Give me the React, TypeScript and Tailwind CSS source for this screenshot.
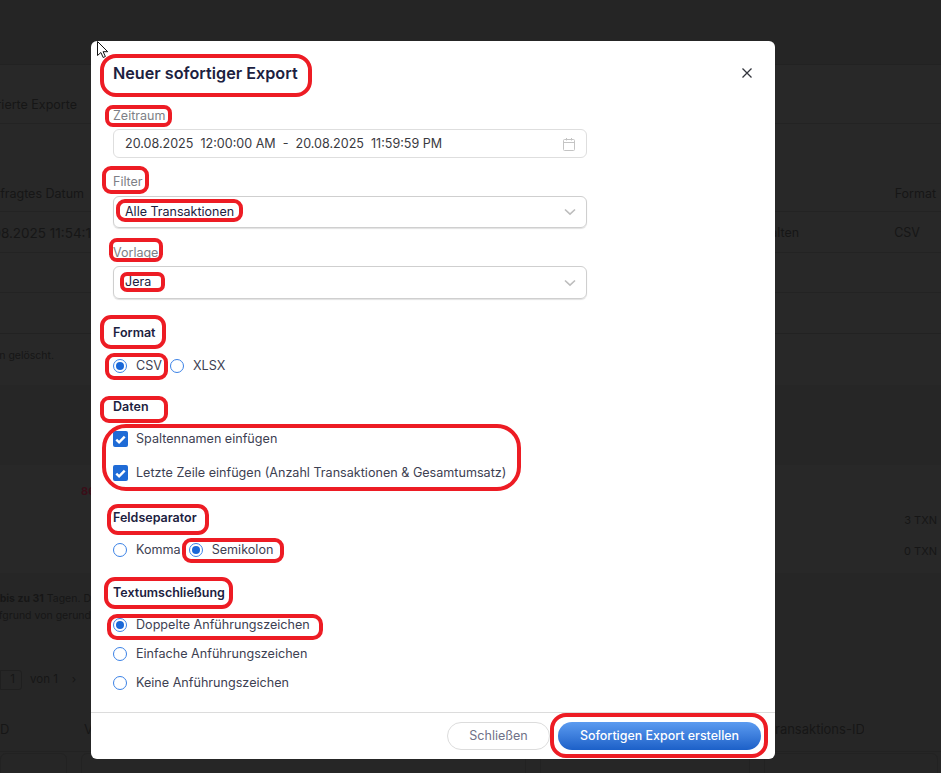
import React from "react";

const font = "font-['Inter',sans-serif]";

const Radio = ({ on, label }: { on?: boolean; label: string }) => (
  <div className="flex items-center gap-[9px] h-5">
    <span className="w-[14px] h-[14px] rounded-full border border-[#3b82e6] flex items-center justify-center bg-white">
      {on && <span className="w-[8px] h-[8px] rounded-full bg-[#1a68d8]" />}
    </span>
    <span className="text-[12.6px] leading-5 text-[#3d4152]">{label}</span>
  </div>
);

const Check = ({ label }: { label: string }) => (
  <div className="flex items-center gap-[8px] h-5">
    <span className="w-[15px] h-4 rounded-[2px] bg-[#1f6bd6] flex items-center justify-center">
      <svg width="11" height="9" viewBox="0 0 11 9" fill="none">
        <path d="M1.3 4.6 4.1 7.3 9.7 1.6" stroke="#fff" strokeWidth="2.4" />
      </svg>
    </span>
    <span className="text-[12.6px] leading-[20px] h-5 text-[#3d4152]">{label}</span>
  </div>
);

const Heading = ({ children, className }: { children: React.ReactNode; className: string }) => (
  <p className={`text-[12.5px] leading-5 h-5 font-semibold text-[#1c2140] ${className}`}>{children}</p>
);

const Label = ({ children, className }: { children: React.ReactNode; className: string }) => (
  <p className={`text-[12.5px] leading-5 h-5 text-[#7e7f86] ${className}`}>{children}</p>
);

const Select = ({ value, className }: { value: string; className: string }) => (
  <div className={`w-[474px] rounded-[6px] border border-[#cfcfcf] shadow-[0_1px_1px_rgba(0,0,0,0.12)] pl-[11px] pr-[10px] flex items-center justify-between ${className}`}>
    <span className="text-[12.5px] text-[#1c2140]">{value}</span>
    <svg width="12" height="8" viewBox="0 0 12 8" fill="none">
      <path d="M1 1.5 6 6.2 11 1.5" stroke="#bdbdbd" strokeWidth="1.6" />
    </svg>
  </div>
);

// marker scribbles somebody put on top of the screenshot
const marks = [
  [11, 15, 208, 39, 14],
  [16, 66, 63, 18, 6],
  [13, 127, 43, 24, 7],
  [27, 160, 123, 19, 7],
  [20, 199, 50, 20, 6],
  [31, 233, 41, 16, 5],
  [11, 276, 62, 30, 9],
  [16, 314, 59, 23, 7],
  [11, 357, 64, 23, 7],
  [13, 385, 415, 63, 22],
  [18, 465, 98, 27, 9],
  [93, 499, 98, 21, 7],
  [15, 538, 125, 28, 9],
  [18, 575, 212, 22, 8],
  [461, 674, 214, 41, 14],
];

const Marks = () => (
  <svg className="absolute inset-0 pointer-events-none" width="684" height="718" fill="none">
    {marks.map(([x, y, w, h, r]) => (
      <rect key={`${x}-${y}`} x={x} y={y} width={w} height={h} rx={r} stroke="#ed1c24" strokeWidth="4" />
    ))}
  </svg>
);

const Modal = () => (
  <div className="absolute left-[91px] top-[41px] w-[684px] h-[718px] bg-white rounded-[6px] flex flex-col">
    <div className="flex-1 pl-[22px]">
      <div className="h-[65px] pt-[21px] pr-[23px] flex justify-between">
        <h2 className="text-[16.2px] leading-[22px] font-semibold text-[#1c2140]">Neuer sofortiger Export</h2>
        <svg className="mt-[6px]" width="10" height="10" viewBox="0 0 10 10" fill="none">
          <path d="M.5.5l9 9M9.5.5l-9 9" stroke="#33353d" strokeWidth="1.3" />
        </svg>
      </div>
      <Label className="">Zeitraum</Label>
      <div className="w-[474px] h-[29px] mt-[3px] pt-[1px] rounded-[6px] border border-[#dedede] pl-[11px] pr-[11px] flex items-center justify-between">
        <span className="text-[12.55px] text-[#3a3a3f] whitespace-pre">20.08.2025  12:00:00 AM  -  20.08.2025  11:59:59 PM</span>
        <svg width="12" height="13" viewBox="0 0 12 13" fill="none" stroke="#c4c4c4">
          <rect x=".5" y="1.5" width="11" height="11" rx="1" />
          <path d="M.5 4.5h11M3.5 0v2.5M8.5 0v2.5" />
        </svg>
      </div>
      <Label className="mt-[14px]">Filter</Label>
      <Select className="h-[32px] mt-[4px]" value="Alle Transaktionen" />
      <Label className="mt-[15px]">Vorlage</Label>
      <Select className="h-[33px] mt-[3px]" value="Jera" />
      <Heading className="mt-[24px]">Format</Heading>
      <div className="flex gap-[8px] mt-[13px]">
        <Radio on label="CSV" />
        <Radio label="XLSX" />
      </div>
      <Heading className="mt-[21px]">Daten</Heading>
      <div className="flex flex-col gap-[14px] mt-[12px]">
        <Check label="Spaltennamen einfügen" />
        <Check label="Letzte Zeile einfügen (Anzahl Transaktionen & Gesamtumsatz)" />
      </div>
      <Heading className="mt-[25px]">Feldseparator</Heading>
      <div className="flex gap-[8px] mt-[12px]">
        <Radio label="Komma" />
        <Radio on label="Semikolon" />
      </div>
      <Heading className="mt-[23px]">Textumschließung</Heading>
      <div className="flex flex-col gap-[9px] mt-[12px]">
        <Radio on label="Doppelte Anführungszeichen" />
        <Radio label="Einfache Anführungszeichen" />
        <Radio label="Keine Anführungszeichen" />
      </div>
    </div>
    <div className="h-[47px] border-t border-[#dcdcdc] flex justify-end gap-[8px] pt-[9px] pr-[14px]">
      <button className="w-[103px] h-[28px] rounded-full border border-[#dcdcdc] text-[12.55px] text-[#6f7187]">Schließen</button>
      <button className="w-[203px] h-[28px] rounded-full bg-gradient-to-b from-[#5b9bf0] to-[#1c60c8] text-[12.45px] font-medium text-white">Sofortigen Export erstellen</button>
    </div>
    <Marks />
    <svg className="absolute left-[6px] top-0" width="13" height="18" viewBox="0 0 13 18">
      <path d="M.5.5v14l3.4-3 2.3 5 2.2-1-2.3-4.8h4.6z" fill="#fff" stroke="#111" />
    </svg>
  </div>
);

const Backdrop = () => (
  <div className="h-[773px] overflow-hidden bg-[#282828] text-[12.5px] text-[#161616]">
    <div className="h-[65px] bg-[#252525] border-b border-[#222]" />
    <div className="h-[59px] border-b border-[#232323] flex items-center">
      <div className="w-[77px] flex justify-end whitespace-nowrap overflow-hidden mt-[22px]">Generierte Exporte</div>
    </div>
    <div className="h-[88px] border-b border-[#232323] flex items-end pb-[7px] justify-between pr-[5px]">
      <div className="w-[84px] flex justify-end whitespace-nowrap overflow-hidden">Angefragtes Datum</div>
      <span>Format</span>
    </div>
    <div className="h-[41px] border-b border-[#232323] flex items-center justify-between pr-[21px] pt-[2px]">
      <div className="w-[91px] flex justify-end whitespace-nowrap overflow-hidden text-[13.5px]">20.08.2025 11:54:1</div>
      <div className="flex gap-[95px]">
        <span>Erhalten</span>
        <span>CSV</span>
      </div>
    </div>
    <div className="h-[40px] border-b border-[#232323]" />
    <div className="h-[41px] border-b border-[#222]" />
    <div className="h-[51px] flex items-center pb-[8px] text-[10.5px]">
      <div className="w-[54px] flex justify-end whitespace-nowrap overflow-hidden">wurden gelöscht.</div>
    </div>
    <div className="h-[80px] bg-[#262626]" />
    <div className="h-[108px] relative">
      <span className="absolute left-[81px] top-[18px] text-[#3a0e18] text-[11px] font-bold">86</span>
      <div className="flex flex-col items-end gap-[14px] pt-[47px] pr-[4px] text-[11px]">
        <span>3 TXN</span>
        <span>0 TXN</span>
      </div>
    </div>
    <div className="bg-[#262626] h-[200px] text-[10.5px]">
      <div className="pt-[17px] leading-[17px]">
        <div className="w-[91px] flex justify-end whitespace-nowrap overflow-hidden">
          <span><b>bis zu 31</b> Tagen. D</span>
        </div>
        <div className="w-[91px] flex justify-end whitespace-nowrap overflow-hidden">aufgrund von gerund</div>
      </div>
      <div className="flex items-center mt-[46px] h-[20px] text-[11.5px]">
        <span className="w-[22px] h-[20px] border border-[#1f1f1f] rounded-r-[3px] text-right pr-[6px]">1</span>
        <span className="ml-[8px]">von 1</span>
        <span className="ml-[14px]">›</span>
      </div>
      <div className="flex justify-between mt-[30px] pr-[77px] text-[13px]">
        <div className="flex gap-[74px]">
          <span className="w-[10px] overflow-hidden">D</span>
          <span>V</span>
        </div>
        <span className="w-[89px] overflow-hidden whitespace-nowrap">ransaktions-ID</span>
      </div>
      <div className="flex gap-[14px] mt-[11px] border-t border-[#222] pt-[1px]">
        <div className="w-[67px] h-[30px] border border-[#222] rounded-[6px]" />
        <div className="w-[445px] h-[30px] border border-[#222] rounded-[6px]" />
        <div className="w-[210px] h-[30px] border border-[#222] rounded-[6px]" />
        <div className="w-[174px] h-[30px] border border-[#222] rounded-[6px]" />
      </div>
    </div>
  </div>
);

export default function App() {
  return (
    <div className={`relative w-[941px] h-[773px] overflow-hidden ${font}`}>
      <Backdrop />
      <Modal />
    </div>
  );
}
